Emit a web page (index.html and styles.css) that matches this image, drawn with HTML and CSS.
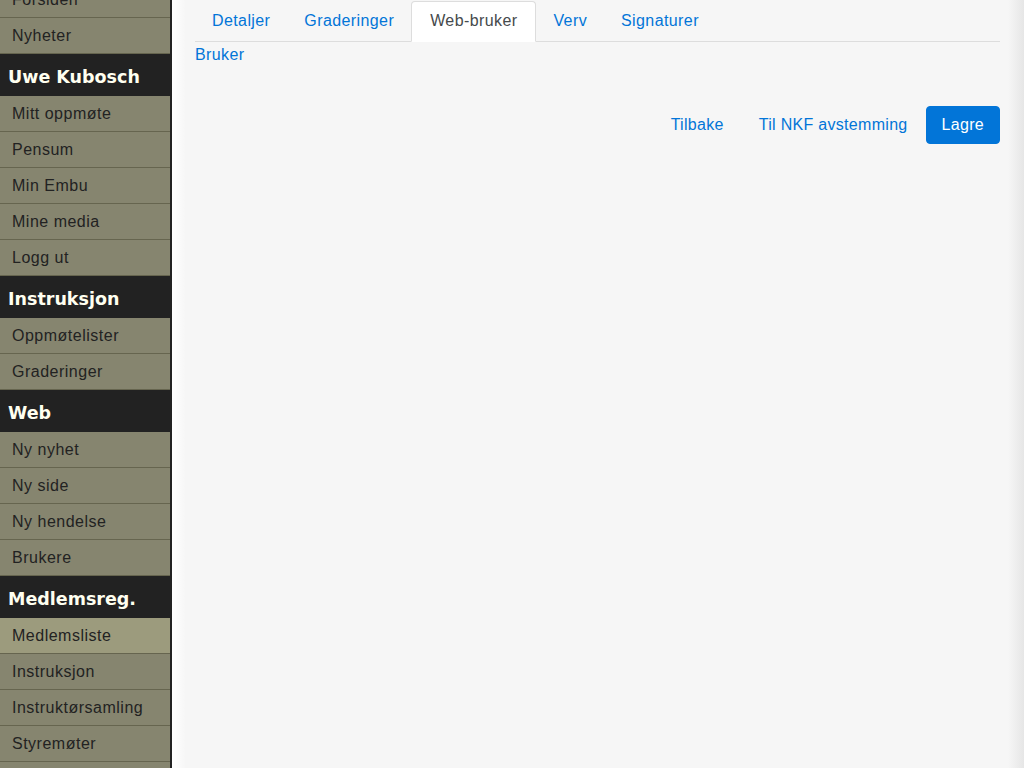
FILE: index.html
```html
<!DOCTYPE html>
<html lang="no">
<head>
<meta charset="utf-8">
<title>Web-bruker</title>
<link rel="stylesheet" href="styles.css">
</head>
<body>
<div class="layout">
  <nav class="sidebar">
    <ul class="menu">
      <li class="item">Forsiden</li>
      <li class="item">Nyheter</li>
      <li class="head">Uwe Kubosch</li>
      <li class="item">Mitt oppmøte</li>
      <li class="item">Pensum</li>
      <li class="item">Min Embu</li>
      <li class="item">Mine media</li>
      <li class="item">Logg ut</li>
      <li class="head">Instruksjon</li>
      <li class="item">Oppmøtelister</li>
      <li class="item">Graderinger</li>
      <li class="head">Web</li>
      <li class="item">Ny nyhet</li>
      <li class="item">Ny side</li>
      <li class="item">Ny hendelse</li>
      <li class="item">Brukere</li>
      <li class="head">Medlemsreg.</li>
      <li class="item active">Medlemsliste</li>
      <li class="item">Instruksjon</li>
      <li class="item">Instruktørsamling</li>
      <li class="item">Styremøter</li>
      <li class="item">Rapporter</li>
    </ul>
  </nav>
  <main class="main">
    <ul class="tabs">
      <li class="tab">Detaljer</li>
      <li class="tab">Graderinger</li>
      <li class="tab active">Web-bruker</li>
      <li class="tab">Verv</li>
      <li class="tab">Signaturer</li>
    </ul>
    <div class="pane">
      <a class="link">Bruker</a>
    </div>
    <div class="actions">
      <a class="btn btn-link">Tilbake</a>
      <a class="btn btn-link">Til NKF avstemming</a>
      <a class="btn btn-primary">Lagre</a>
    </div>
  </main>
</div>
</body>
</html>
```

FILE: styles.css
```css
* { box-sizing: border-box; }
html, body { margin: 0; padding: 0; height: 100%; }
body {
  font-family: "Liberation Sans", Arial, sans-serif;
  font-size: 16px;
  line-height: 24px;
  background: #f6f6f6;
  overflow: hidden;
}
.layout {
  display: flex;
  height: 768px;
}
.sidebar {
  width: 172px;
  flex: 0 0 172px;
  background: #86856f;
  border-right: 2px solid #222;
  overflow: hidden;
}
.menu {
  list-style: none;
  margin: -18px 0 0;
  padding: 0;
}
.item {
  height: 36px;
  line-height: 35px;
  padding-left: 12px;
  color: #222;
  border-bottom: 1px solid #66654f;
  font-size: 16px;
  letter-spacing: 0.5px;
}
.item.active { background: #9c9b7d; }
.head {
  height: 42px;
  line-height: 38px;
  padding: 4px 0 0 8px;
  background: #222;
  color: #fffff0;
  font-family: "DejaVu Sans", Verdana, sans-serif;
  font-weight: bold;
  font-size: 17.5px;
}
.main {
  flex: 1;
  padding: 2px 24px 0 23px;
  letter-spacing: 0.4px;
  background:
    linear-gradient(to right, #ffffff, rgba(246,246,246,0) 14px),
    linear-gradient(to left, #e6e6e6, rgba(246,246,246,0) 16px),
    #f6f6f6;
}
.tabs {
  list-style: none;
  margin: -1px 0 0;
  padding: 0;
  display: flex;
  border-bottom: 1px solid #dddddd;
}
.tab {
  padding: 7px 16px 8px;
  border: 1px solid transparent;
  border-radius: 4px 4px 0 0;
  margin-bottom: -1px;
  color: #0275d8;
  line-height: 24px;
}
.tab.active {
  background: #fff;
  border-color: #dddddd #dddddd transparent;
  color: #464a4c;
  padding: 7px 18px 8px;
}
.pane { padding-top: 1px; line-height: 24px; }
.link { color: #0275d8; }
.actions {
  display: flex;
  justify-content: flex-end;
  gap: 1px;
  margin-top: 39px;
  letter-spacing: 0.3px;
}
.btn {
  display: inline-block;
  padding: 6px 16px;
  border: 1px solid transparent;
  border-radius: 4px;
  line-height: 24px;
  font-size: 16px;
}
.btn-link { color: #0275d8; }
.btn-primary {
  background: #0275d8;
  color: #fff;
  border-color: #0275d8;
  padding: 6px 15px;
}
```
